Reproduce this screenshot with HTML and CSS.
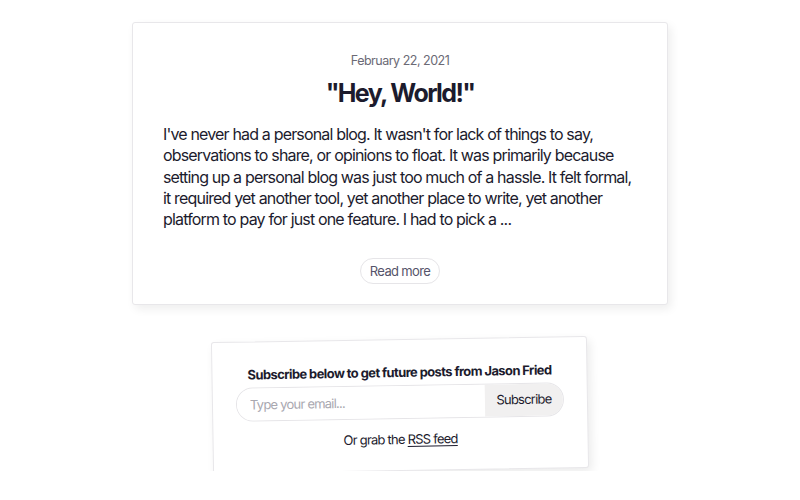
FILE: index.html
```html
<!DOCTYPE html>
<html>
<head>
<meta charset="utf-8">
<link rel="stylesheet" href="styles.css">
</head>
<body>
<main class="page">
  <article class="post-card">
    <div class="post-date">February 22, 2021</div>
    <h1 class="post-title">"Hey, World!"</h1>
    <p class="post-excerpt">I've never had a personal blog. It wasn't for lack of things to say, observations to share, or opinions to float. It was primarily because setting up a personal blog was just too much of a hassle. It felt formal, it required yet another tool, yet another place to write, yet another platform to pay for just one feature. I had to pick a ...</p>
    <div class="read-more-row"><a class="read-more" href="#">Read more</a></div>
  </article>
  <section class="subscribe-card">
    <h2 class="subscribe-title">Subscribe below to get future posts from Jason Fried</h2>
    <form class="subscribe-form">
      <input class="email-input" type="text" placeholder="Type your email...">
      <button class="subscribe-btn" type="button">Subscribe</button>
    </form>
    <p class="rss-line">Or grab the <a class="rss-link" href="#">RSS feed</a></p>
  </section>
</main>
</body>
</html>
```
FILE: styles.css
```css
* { box-sizing: border-box; }
html, body { margin: 0; padding: 0; background: #ffffff; }
body {
  font-family: Inter, "Noto Sans", sans-serif;
  color: #1c1b2d;
  letter-spacing: -0.052em;
}
.page {
  display: flex;
  flex-direction: column;
  align-items: center;
  padding-top: 22px;
}
.post-card {
  width: 536px;
  border: 1px solid #e8e7ea;
  border-radius: 3px;
  background: #fff;
  box-shadow: 3px 4px 10px rgba(0,0,0,0.07);
  padding: 29px 30px 20px;
}
.post-date {
  text-align: center;
  font-size: 12.5px;
  line-height: 18px;
  color: #6b6a75;
  letter-spacing: -0.04em;
}
.post-title {
  margin: 7px 0 0;
  text-align: center;
  font-size: 25px;
  line-height: 32px;
  font-weight: 700;
  color: #1c1b2d;
  letter-spacing: -0.065em;
}
.post-excerpt {
  margin: 15px 0 0;
  font-size: 16px;
  line-height: 21.25px;
  color: #1c1b2d;
}
.read-more-row {
  display: flex;
  justify-content: center;
  margin-top: 28px;
}
.read-more {
  display: inline-flex;
  align-items: center;
  height: 26px;
  padding: 0 9px;
  border: 1px solid #e6e5e8;
  border-radius: 13px;
  font-size: 13px;
  color: #55546a;
  text-decoration: none;
  letter-spacing: -0.05em;
}
.subscribe-card {
  margin-top: 34px;
  width: 376px;
  height: 132px;
  border: 1px solid #e8e7ea;
  border-radius: 3px;
  background: #fff;
  box-shadow: 3px 4px 10px rgba(0,0,0,0.08);
  transform: rotate(-0.95deg);
  padding: 23px 24px 0;
  display: flex;
  flex-direction: column;
  align-items: center;
}
.subscribe-title {
  margin: 0;
  font-size: 13px;
  line-height: 18px;
  font-weight: 700;
  color: #1c1b2d;
  letter-spacing: -0.047em;
  white-space: nowrap;
}
.subscribe-form {
  margin: 4px 0 0;
  width: 328px;
  height: 34px;
  display: flex;
  border: 1px solid #e6e5e8;
  border-radius: 17px;
  overflow: hidden;
}
.email-input {
  flex: 1;
  min-width: 0;
  border: 0;
  outline: 0;
  padding: 0 13px;
  font-family: inherit;
  font-size: 13px;
  letter-spacing: -0.06em;
  color: #1c1b2d;
  background: #fff;
}
.email-input::placeholder { color: #a9a8b0; }
.subscribe-btn {
  width: 78px;
  border: 0;
  background: #f1f0f0;
  font-family: inherit;
  font-size: 13px;
  letter-spacing: -0.06em;
  color: #1c1b2d;
  padding: 0 0 2px;
}
.rss-line {
  margin: 11px 0 0;
  font-size: 13px;
  line-height: 18px;
  color: #1c1b2d;
  letter-spacing: -0.06em;
}
.rss-link {
  color: #1c1b2d;
  text-decoration: underline;
  text-underline-offset: 2px;
}
```
